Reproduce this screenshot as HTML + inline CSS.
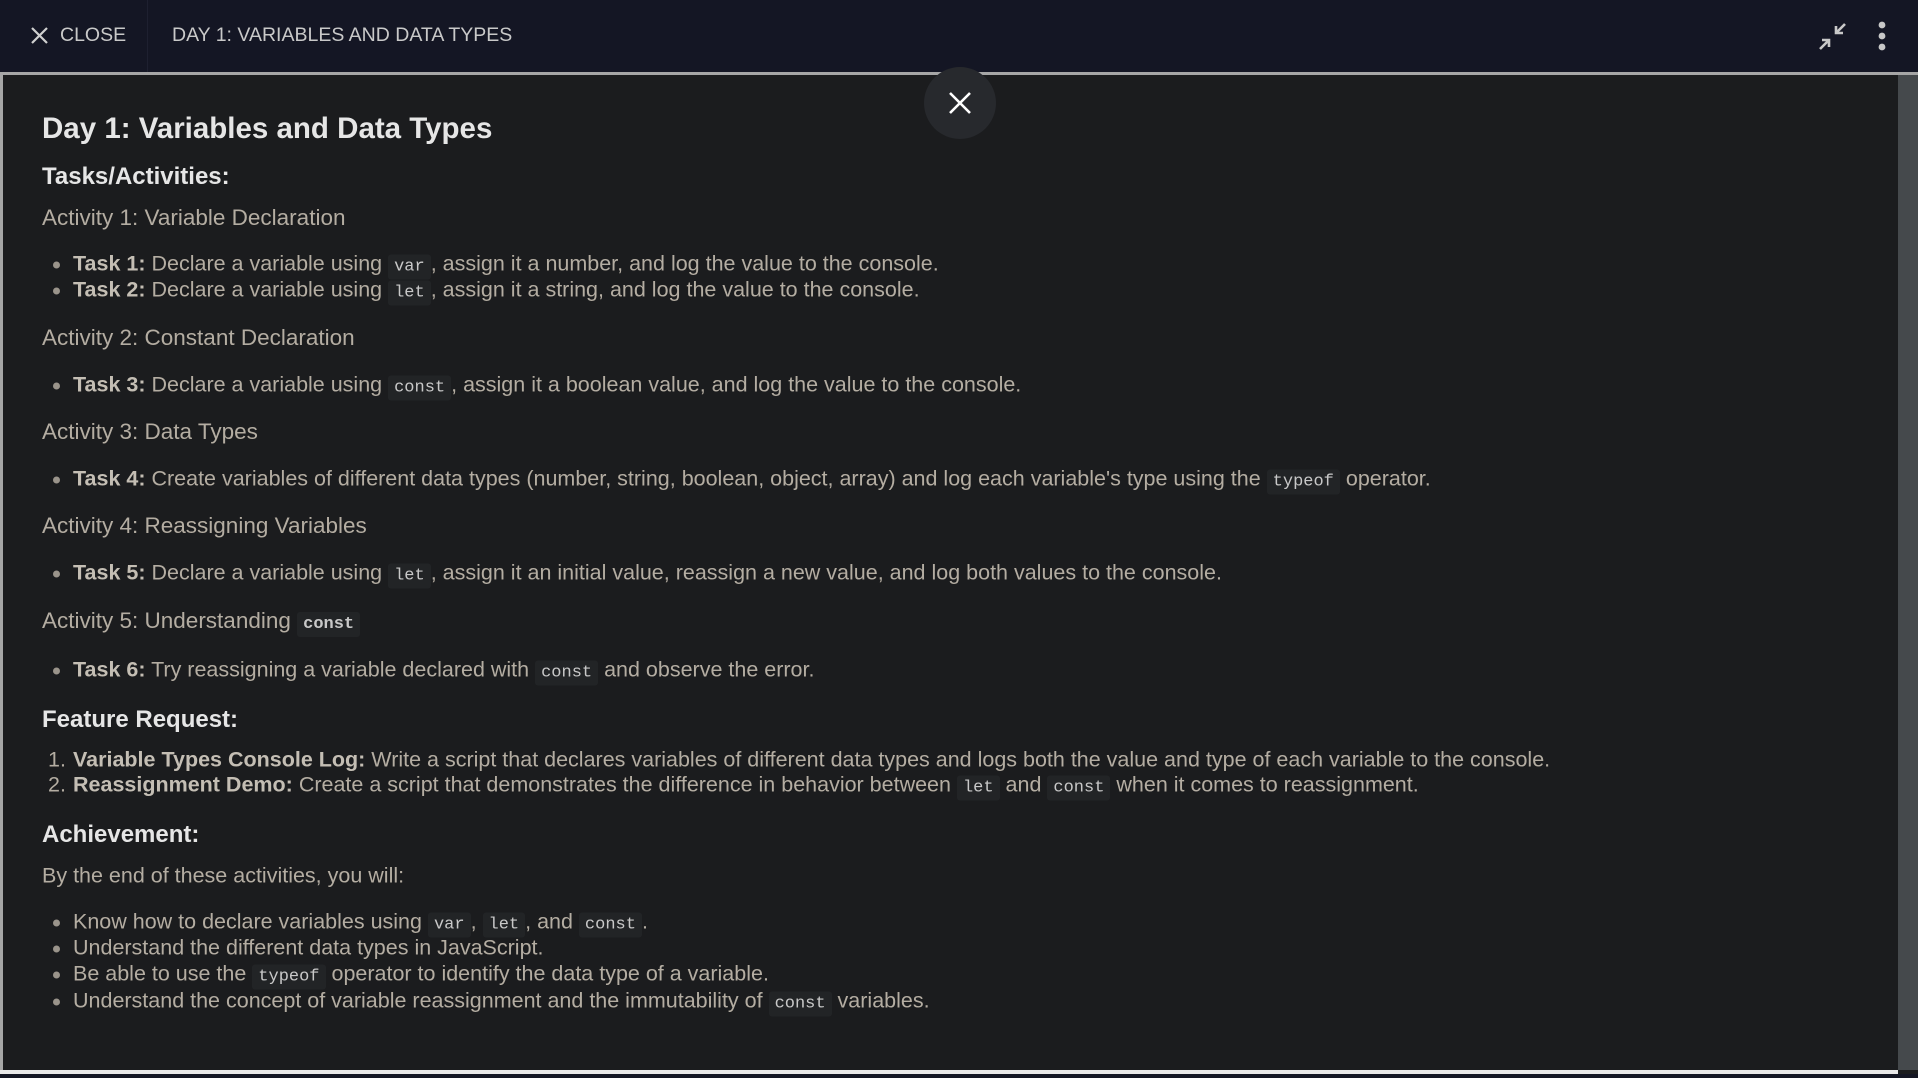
<!DOCTYPE html>
<html><head><meta charset="utf-8"><style>
*{margin:0;padding:0;box-sizing:border-box}
body{width:1918px;height:1078px;overflow:hidden;background:#1b1c1e;font-family:"Liberation Sans",sans-serif;position:relative}
.top{position:absolute;left:0;top:0;width:1918px;height:72px;background:#141624;color:#c9c9c9;font-size:19.5px}
.top .sep{position:absolute;left:147px;top:0;width:1px;height:72px;background:#1e2030}
.line{position:absolute;left:0;top:72px;width:1918px;height:3px;background:#a6a6a6}
.lb{position:absolute;left:0;top:75px;width:3px;height:998px;background:#a6a6a6}
.sb{position:absolute;left:1898px;top:75px;width:20px;height:995px;background:#45494c}
.bot{position:absolute;left:0;top:1070px;width:1898px;height:4px;background:#e8e8e8}
.bot2{position:absolute;left:0;top:1074px;width:1918px;height:4px;background:#141624}
.t{position:absolute;left:42px;white-space:nowrap;color:#b4ada2;font-size:21.5px;transform:translateY(-50%)}
.act{font-size:22.5px}
.h1{font-size:29.5px;font-weight:bold;color:#e6e6e6}
.h2{font-size:24px;font-weight:bold;color:#e6e6e6}
.li{left:73px}
.li:before{content:"";position:absolute;left:-20px;top:50%;width:7px;height:7px;margin-top:-3px;border-radius:50%;background:#9a948b}
.ol{left:73px}
b{color:#c4beb4}
code{font-family:"Liberation Mono",monospace;font-size:17px;background:#222426;color:#c8c8c8;padding:3px 6px;border-radius:3px}
.cb{position:absolute;left:924px;top:67px;width:72px;height:72px;border-radius:50%;background:#27292d}
</style></head><body>
<div class="top">
<svg style="position:absolute;left:31px;top:27px" width="17" height="17" viewBox="0 0 17 17"><path d="M1 1L16 16M16 1L1 16" stroke="#d0d0d0" stroke-width="2.2"/></svg>
<div style="position:absolute;left:60px;top:24px">CLOSE</div>
<div class="sep"></div>
<div style="position:absolute;left:172px;top:24px">DAY 1: VARIABLES AND DATA TYPES</div>
<svg style="position:absolute;left:1818px;top:22px" width="28" height="28" viewBox="0 0 28 28"><path d="M27 2L18 11M18 4V11H25M2 27L11 18M4 18H11V25" stroke="#c8c8c8" stroke-width="2.6" fill="none"/></svg>
<svg style="position:absolute;left:1876px;top:20px" width="12" height="34"><circle cx="6" cy="5" r="3.4" fill="#c8c8c8"/><circle cx="6" cy="16" r="3.4" fill="#c8c8c8"/><circle cx="6" cy="27" r="3.4" fill="#c8c8c8"/></svg>
</div>
<div class="line"></div><div class="lb"></div><div class="sb"></div><div class="bot"></div><div class="bot2"></div>
<div class="cb"><svg style="position:absolute;left:25px;top:25px" width="22" height="22"><path d="M1 1L21 21M21 1L1 21" stroke="#fff" stroke-width="2.6"/></svg></div>

<div class="t h1" style="top:129px">Day 1: Variables and Data Types</div>
<div class="t h2" style="top:177px">Tasks/Activities:</div>
<div class="t act" style="top:218px">Activity 1: Variable Declaration</div>
<div class="t li" style="top:264px"><b>Task 1:</b> Declare a variable using <code>var</code>, assign it a number, and log the value to the console.</div>
<div class="t li" style="top:290px"><b>Task 2:</b> Declare a variable using <code>let</code>, assign it a string, and log the value to the console.</div>
<div class="t act" style="top:338px">Activity 2: Constant Declaration</div>
<div class="t li" style="top:385px"><b>Task 3:</b> Declare a variable using <code>const</code>, assign it a boolean value, and log the value to the console.</div>
<div class="t act" style="top:432px">Activity 3: Data Types</div>
<div class="t li" style="top:479px"><b>Task 4:</b> Create variables of different data types (number, string, boolean, object, array) and log each variable's type using the <code>typeof</code> operator.</div>
<div class="t act" style="top:526px">Activity 4: Reassigning Variables</div>
<div class="t li" style="top:573px"><b>Task 5:</b> Declare a variable using <code>let</code>, assign it an initial value, reassign a new value, and log both values to the console.</div>
<div class="t act" style="top:621px">Activity 5: Understanding <code style="font-weight:bold">const</code></div>
<div class="t li" style="top:670px"><b>Task 6:</b> Try reassigning a variable declared with <code>const</code> and observe the error.</div>
<div class="t h2" style="top:720px">Feature Request:</div>
<div class="t ol" style="top:760px"><span style="position:absolute;left:-25px">1.</span><b>Variable Types Console Log:</b> Write a script that declares variables of different data types and logs both the value and type of each variable to the console.</div>
<div class="t ol" style="top:785px"><span style="position:absolute;left:-25px">2.</span><b>Reassignment Demo:</b> Create a script that demonstrates the difference in behavior between <code>let</code> and <code>const</code> when it comes to reassignment.</div>
<div class="t h2" style="top:835px">Achievement:</div>
<div class="t" style="top:876px">By the end of these activities, you will:</div>
<div class="t li" style="top:922px">Know how to declare variables using <code>var</code>, <code>let</code>, and <code>const</code>.</div>
<div class="t li" style="top:948px">Understand the different data types in JavaScript.</div>
<div class="t li" style="top:974px">Be able to use the <code>typeof</code> operator to identify the data type of a variable.</div>
<div class="t li" style="top:1001px">Understand the concept of variable reassignment and the immutability of <code>const</code> variables.</div>
</body></html>
